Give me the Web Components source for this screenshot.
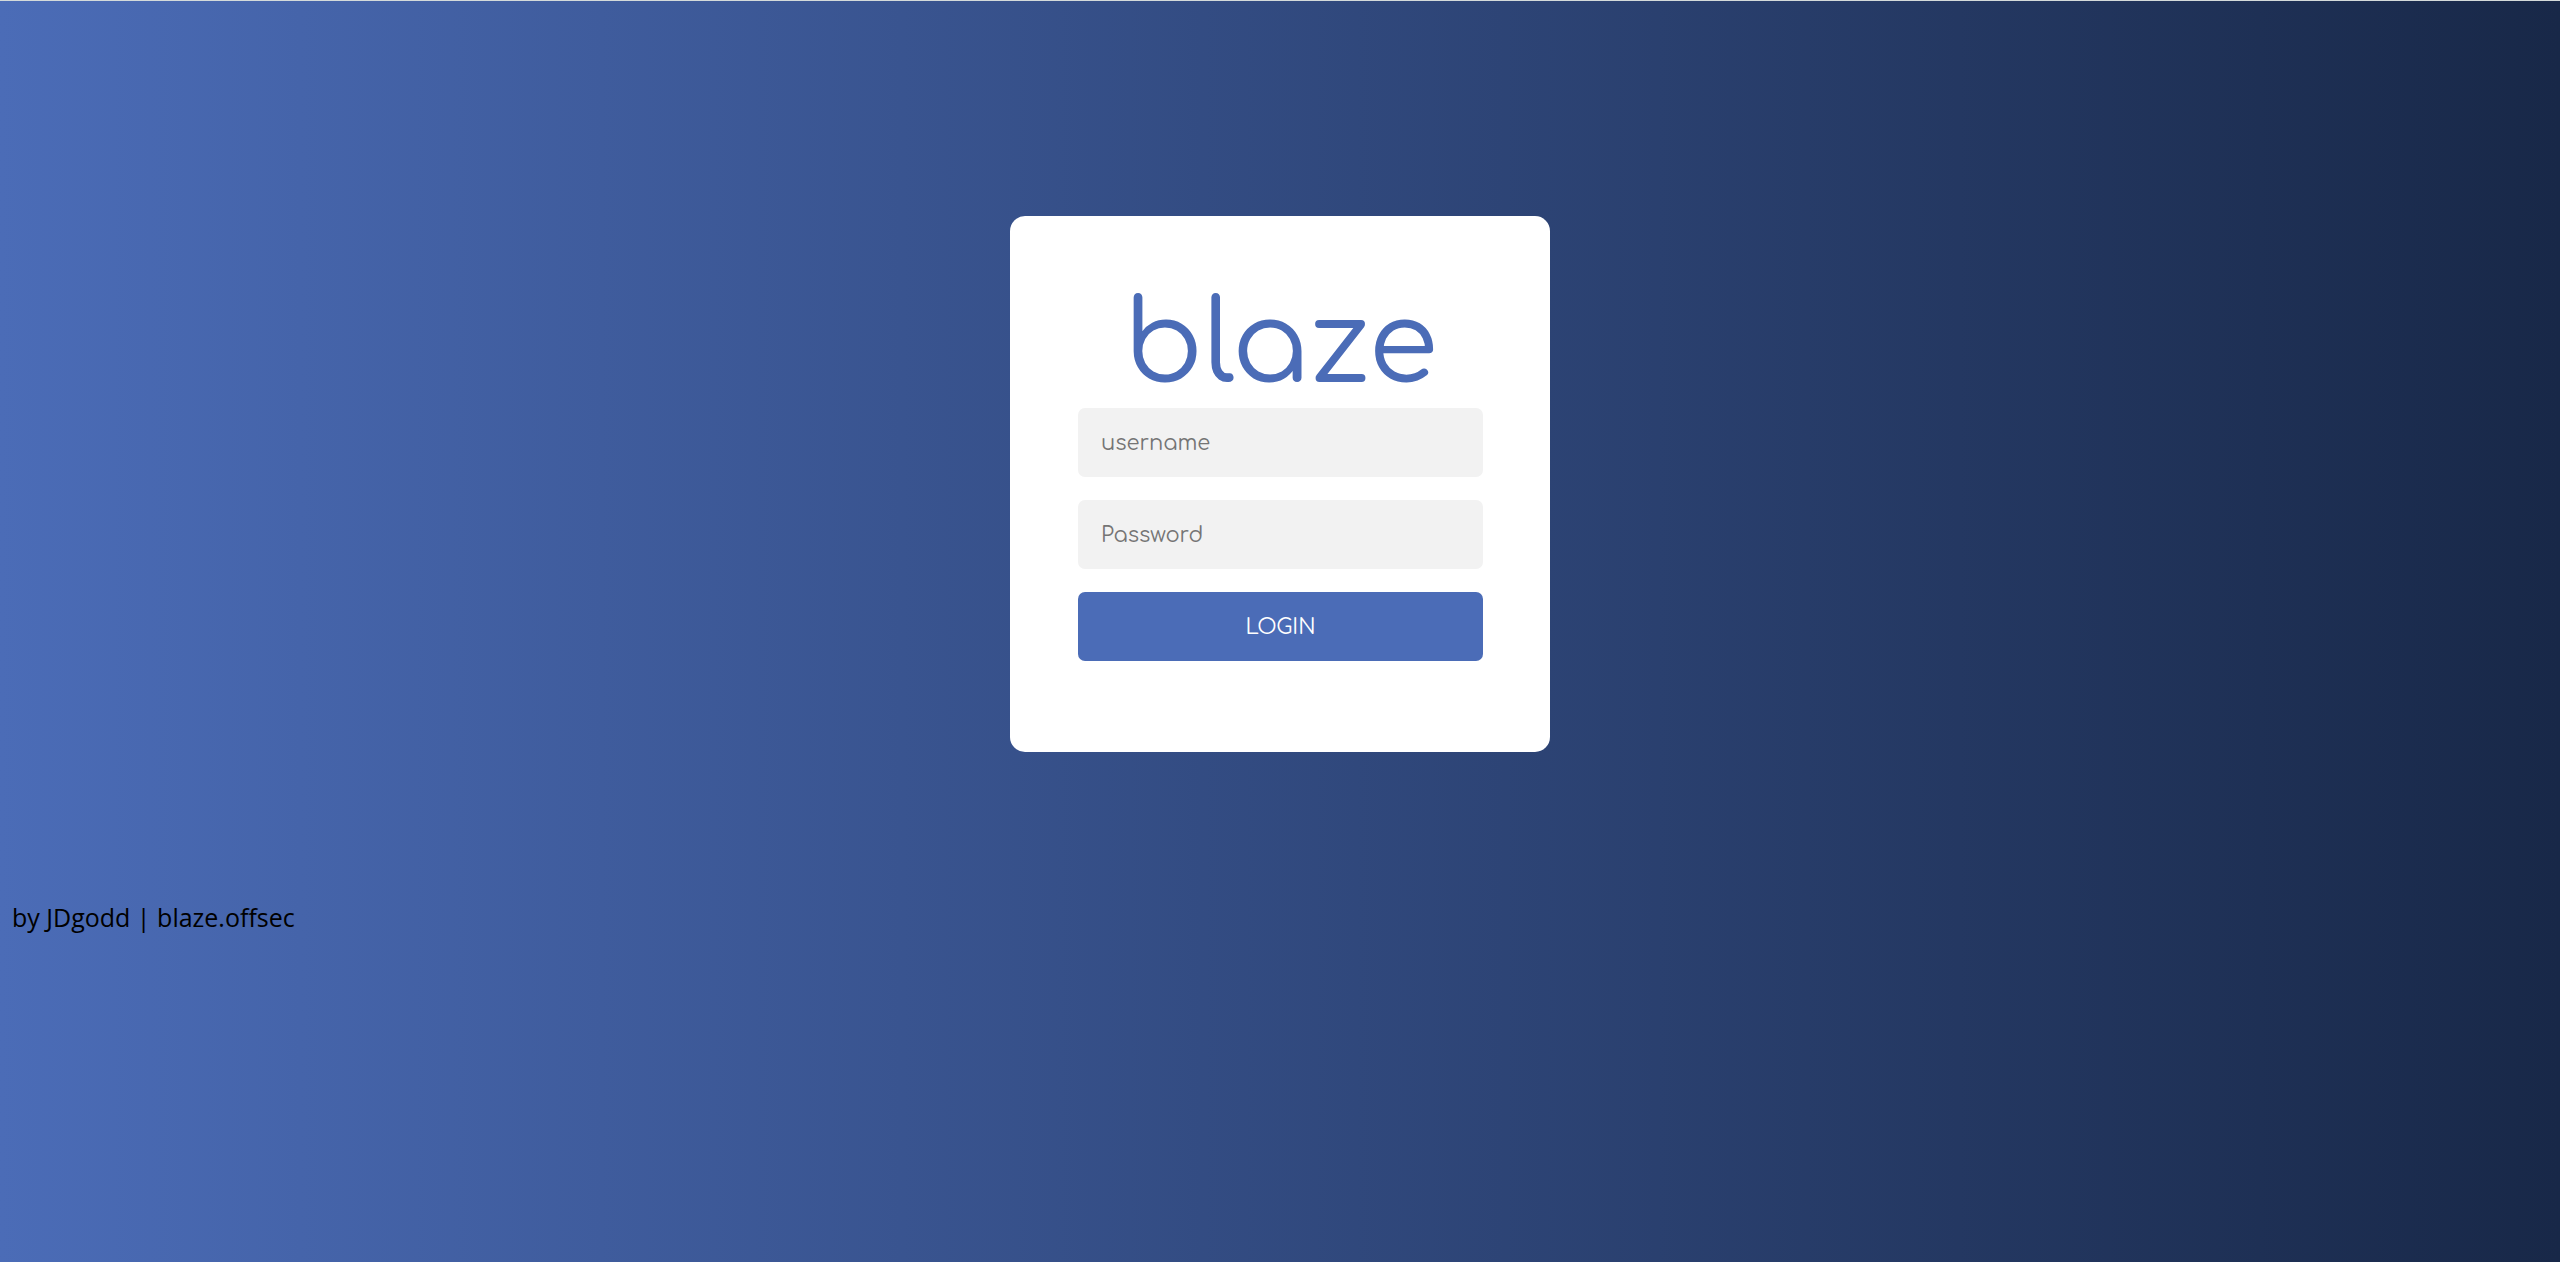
<!DOCTYPE html>
<html lang="en">
<head>
<meta charset="utf-8">
<title>blaze</title>
<style>
  html { min-height: 100%; display: flex; }
  body { margin: 0; flex: 1; display: flex; }
</style>
</head>
<body>
<login-page>
  <login-card>
    <brand-name slot="brand">blaze</brand-name>
    <text-field type="text" label="username"></text-field>
    <text-field type="password" label="Password"></text-field>
    <submit-button>LOGIN</submit-button>
  </login-card>
  <span slot="credit">by JDgodd | blaze.offsec</span>
</login-page>
<script>
  class Base extends HTMLElement {
    constructor() {
      super();
      this.attachShadow({ mode: "open" });
    }
    connectedCallback() {
      this.shadowRoot.innerHTML = this.render();
    }
  }

  customElements.define("login-page", class extends Base {
    render() {
      return `<style>
        :host { display: flex; flex-direction: column; flex: 1; box-sizing: border-box;
          padding: 0 12px; border-top: 1px solid #d4dada;
          background: linear-gradient(to right, #4b6cb7, #182848) border-box;
          color: #000; font: 25px/36px "Segoe UI", "Open Sans", "Noto Sans", sans-serif; }
        main { display: flex; justify-content: center; padding: 215px 0 147px; }
      </style>
      <main><slot></slot></main>
      <footer><slot name="credit"></slot></footer>`;
    }
  });

  customElements.define("login-card", class extends Base {
    render() {
      return `<style>
        :host { display: block; width: 540px; max-width: 100%; box-sizing: border-box;
          padding: 67px 67px 91px 68px; border-radius: 15px; background: #fff;
          font: 400 21px/24px Comfortaa, "DejaVu Sans", sans-serif; }
        form { display: flex; flex-direction: column; gap: 23px; margin: 0; }
      </style>
      <slot name="brand"></slot>
      <form onsubmit="return false"><slot></slot></form>`;
    }
  });

  customElements.define("brand-name", class extends Base {
    render() {
      return `<style>
        :host { display: block; color: #4b6cb7; text-align: center; }
        h1 { margin: 0; font-size: 113px; line-height: 125px; font-weight: 400; }
      </style>
      <h1><slot></slot></h1>`;
    }
  });

  customElements.define("text-field", class extends Base {
    render() {
      const label = this.getAttribute("label");
      return `<style>
        :host { display: block; }
        label { display: block; }
        input { display: block; width: 100%; height: 69px; box-sizing: border-box;
          padding: 0 23px; border: 0; outline: 0; border-radius: 7px;
          background: #f2f2f2; color: #000; font: inherit; }
        input::placeholder { color: #757575; opacity: 1; }
      </style>
      <label><input type="${this.getAttribute("type")}" placeholder="${label}" aria-label="${label}"></label>`;
    }
  });

  customElements.define("submit-button", class extends Base {
    render() {
      return `<style>
        :host { display: block; }
        button { display: block; width: 100%; height: 69px; padding: 0; border: 0;
          border-radius: 7px; background: #4b6cb7; color: #fff; font: inherit; cursor: pointer; }
      </style>
      <button type="submit"><slot></slot></button>`;
    }
  });
</script>
</body>
</html>
